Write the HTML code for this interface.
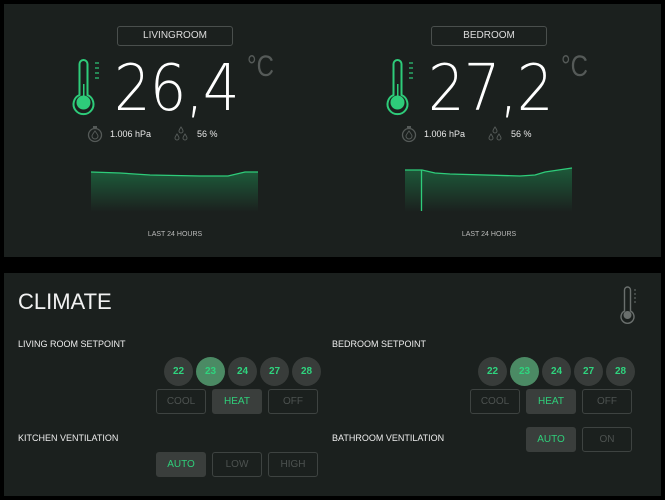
<!DOCTYPE html>
<html><head><meta charset="utf-8"><style>
*{margin:0;padding:0;box-sizing:border-box}
body{width:665px;height:500px;background:#000;position:relative;overflow:hidden;font-family:"Liberation Sans",sans-serif;color:#ddd}
.p{position:absolute;background:#1b201e}
.a{position:absolute}
.box{position:absolute;border:1px solid #4a4f4d;border-radius:3px;height:20px;width:116px;top:26px;font-size:10px;color:#ddd;text-align:center;line-height:18px}
.num{position:absolute;top:53px;font-size:64px;color:#fff;font-family:"DejaVu Sans ExtraLight","DejaVu Sans Light","Liberation Sans",sans-serif;font-weight:200;letter-spacing:-1px;transform:scaleX(.9);transform-origin:left;line-height:72px}
.deg{position:absolute;top:50px;font-size:30px;color:#555a58;font-family:"DejaVu Sans ExtraLight","Liberation Sans",sans-serif;font-weight:200;transform:scaleX(.8);transform-origin:left}
.s{position:absolute;font-size:9px;color:#e8e8e8;top:129px}
.l24{position:absolute;top:231px;font-size:7px;color:#bbb;width:168px;text-align:center}
.lab{position:absolute;font-size:9px;color:#eee}
.c{position:absolute;width:29px;height:29px;border-radius:50%;background:#383c3a;color:#2fd47e;font-weight:bold;font-size:10px;text-align:center;line-height:29px;top:357px}
.c.on{background:#4b8a64;color:#2fd47e}
.b{position:absolute;width:50px;height:25px;border:1px solid #3e4341;border-radius:3px;font-size:10px;color:#4d5250;text-align:center;line-height:23px}
.b.on{background:#3a3e3c;border-color:#3a3e3c;color:#2fcf7a}
</style></head><body>
<div class="p" style="left:4px;top:4px;width:657px;height:253px"></div>
<div class="p" style="left:4px;top:273px;width:657px;height:223px"></div>

<svg class="a" style="left:0;top:0" width="665" height="260">
<defs><linearGradient id="g" x1="0" y1="0" x2="0" y2="1"><stop offset="0" stop-color="#1d5a3a"/><stop offset="1" stop-color="#1b201e"/></linearGradient></defs>
<g id="th">
<path d="M79.5 64 a4 4 0 0 1 8 0 v31 a10 10 0 1 1 -8 0z" fill="none" stroke="#2ecc7a" stroke-width="2"/>
<circle cx="83.5" cy="102.5" r="7" fill="#2ecc7a"/><rect x="83" y="84" width="1.5" height="14" fill="#2ecc7a"/>
<g stroke="#2ecc7a" stroke-width="1.2"><line x1="95" y1="63" x2="99" y2="63"/><line x1="95" y1="68" x2="99" y2="68"/><line x1="95" y1="73" x2="99" y2="73"/><line x1="95" y1="78" x2="99" y2="78"/></g>
<circle cx="95" cy="135" r="6.5" fill="none" stroke="#555a58" stroke-width="1.3"/><rect x="93" y="126" width="4" height="2" fill="#555a58"/>
<path d="M95 131 q-3 4 -3 5 a3 3 0 0 0 6 0 q0-1 -3-5z" fill="none" stroke="#555a58" stroke-width="1"/>
<g fill="none" stroke="#555a58" stroke-width="1"><path d="M181 127 q-2 3 -2 4 a2 2 0 0 0 4 0 q0-1-2-4z"/><path d="M177 134 q-2 3 -2 4 a2 2 0 0 0 4 0 q0-1-2-4z"/><path d="M185 134 q-2 3 -2 4 a2 2 0 0 0 4 0 q0-1-2-4z"/></g>
</g>
<use href="#th" x="314"/>
<path d="M91 172 L120 173 L150 175 L200 176 L228 176 L245 172 L258 172 L258 212 L91 212Z" fill="url(#g)"/>
<path d="M91 172 L120 173 L150 175 L200 176 L228 176 L245 172 L258 172" fill="none" stroke="#2ecc7a" stroke-width="1.3"/>
<path d="M405 170 L422 170 L435 173 L450 174 L520 176 L535 175 L545 172 L572 168 L572 212 L405 212Z" fill="url(#g)"/>
<path d="M405 170 L422 170 L435 173 L450 174 L520 176 L535 175 L545 172 L572 168" fill="none" stroke="#2ecc7a" stroke-width="1.3"/>
<line x1="421.5" y1="170" x2="421.5" y2="211" stroke="#2ecc7a" stroke-width="1.3"/>
</svg>

<div class="box" style="left:117px">LIVINGROOM</div>
<div class="box" style="left:431px">BEDROOM</div>
<div class="num" style="left:114px">26,4</div>
<div class="num" style="left:428px">27,2</div>
<div class="deg" style="left:247px">°C</div>
<div class="deg" style="left:561px">°C</div>
<div class="s" style="left:110px">1.006 hPa</div>
<div class="s" style="left:197px">56 %</div>
<div class="s" style="left:424px">1.006 hPa</div>
<div class="s" style="left:511px">56 %</div>
<div class="l24" style="left:91px">LAST 24 HOURS</div>
<div class="l24" style="left:405px">LAST 24 HOURS</div>

<div class="a" style="left:18px;top:289px;font-size:22px;color:#f2f2f2;font-family:'DejaVu Sans ExtraLight','Liberation Sans',sans-serif;font-weight:200">CLIMATE</div>
<svg class="a" style="left:615px;top:285px" width="30" height="40">
<path d="M9.5 5 a3 3 0 0 1 6 0 v21 a6.5 6.5 0 1 1 -6 0z" fill="none" stroke="#6a6f6d" stroke-width="1.4"/>
<circle cx="12.5" cy="30" r="4" fill="#6a6f6d"/>
<g stroke="#6a6f6d"><line x1="19" y1="5" x2="21" y2="5"/><line x1="19" y1="9" x2="21" y2="9"/><line x1="19" y1="13" x2="21" y2="13"/><line x1="19" y1="17" x2="21" y2="17"/></g>
</svg>
<div class="lab" style="left:18px;top:339px">LIVING ROOM SETPOINT</div>
<div class="lab" style="left:332px;top:339px">BEDROOM SETPOINT</div>
<div class="lab" style="left:18px;top:433px">KITCHEN VENTILATION</div>
<div class="lab" style="left:332px;top:433px">BATHROOM VENTILATION</div>

<div class="c" style="left:164px">22</div><div class="c on" style="left:196px">23</div><div class="c" style="left:228px">24</div><div class="c" style="left:260px">27</div><div class="c" style="left:292px">28</div>
<div class="c" style="left:478px">22</div><div class="c on" style="left:510px">23</div><div class="c" style="left:542px">24</div><div class="c" style="left:574px">27</div><div class="c" style="left:606px">28</div>

<div class="b" style="left:156px;top:389px">COOL</div><div class="b on" style="left:212px;top:389px">HEAT</div><div class="b" style="left:268px;top:389px">OFF</div>
<div class="b" style="left:470px;top:389px">COOL</div><div class="b on" style="left:526px;top:389px">HEAT</div><div class="b" style="left:582px;top:389px">OFF</div>
<div class="b on" style="left:156px;top:452px">AUTO</div><div class="b" style="left:212px;top:452px">LOW</div><div class="b" style="left:268px;top:452px">HIGH</div>
<div class="b on" style="left:526px;top:427px">AUTO</div><div class="b" style="left:582px;top:427px">ON</div>
</body></html>
